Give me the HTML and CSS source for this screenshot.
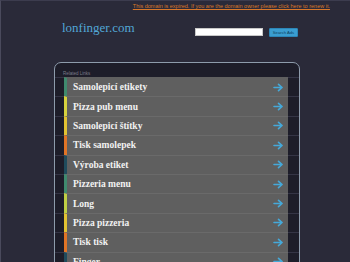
FILE: index.html
```html
<!DOCTYPE html>
<html>
<head>
<meta charset="utf-8">
<link rel="stylesheet" href="styles.css">
</head>
<body>
<div class="page">
  <div class="notice"><a href="#">This domain is expired. If you are the domain owner please click here to renew it.</a></div>
  <div class="header">
    <div class="logo">lonfinger.com</div>
    <form class="search">
      <input class="search-input" type="text">
      <button class="search-btn" type="button">Search Ads</button>
    </form>
  </div>
  <div class="panel">
    <div class="panel-title">Related Links</div>
    <div class="list">
      <div class="row"><div class="item c1"><span>Samolepicí etikety</span><svg class="arrow" viewBox="0 0 12 10"><path d="M1 5H10M6 1.5L10 5L6 8.5"/></svg></div></div>
      <div class="row"><div class="item c2"><span>Pizza pub menu</span><svg class="arrow" viewBox="0 0 12 10"><path d="M1 5H10M6 1.5L10 5L6 8.5"/></svg></div></div>
      <div class="row"><div class="item c3"><span>Samolepicí štítky</span><svg class="arrow" viewBox="0 0 12 10"><path d="M1 5H10M6 1.5L10 5L6 8.5"/></svg></div></div>
      <div class="row"><div class="item c4"><span>Tisk samolepek</span><svg class="arrow" viewBox="0 0 12 10"><path d="M1 5H10M6 1.5L10 5L6 8.5"/></svg></div></div>
      <div class="row"><div class="item c5"><span>Výroba etiket</span><svg class="arrow" viewBox="0 0 12 10"><path d="M1 5H10M6 1.5L10 5L6 8.5"/></svg></div></div>
      <div class="row"><div class="item c1"><span>Pizzeria menu</span><svg class="arrow" viewBox="0 0 12 10"><path d="M1 5H10M6 1.5L10 5L6 8.5"/></svg></div></div>
      <div class="row"><div class="item c6"><span>Long</span><svg class="arrow" viewBox="0 0 12 10"><path d="M1 5H10M6 1.5L10 5L6 8.5"/></svg></div></div>
      <div class="row"><div class="item c3"><span>Pizza pizzeria</span><svg class="arrow" viewBox="0 0 12 10"><path d="M1 5H10M6 1.5L10 5L6 8.5"/></svg></div></div>
      <div class="row"><div class="item c4"><span>Tisk tisk</span><svg class="arrow" viewBox="0 0 12 10"><path d="M1 5H10M6 1.5L10 5L6 8.5"/></svg></div></div>
      <div class="row"><div class="item c5"><span>Finger</span><svg class="arrow" viewBox="0 0 12 10"><path d="M1 5H10M6 1.5L10 5L6 8.5"/></svg></div></div>
    </div>
  </div>
</div>
</body>
</html>
```
FILE: styles.css
```css
html, body {
  margin: 0;
  padding: 0;
  height: 100%;
  overflow: hidden;
  background: #2a2a39;
}
.page {
  height: 100%;
  border-left: 1px solid #4a4a5c;
  border-top: 1px solid #3c3c4e;
  box-sizing: border-box;
  font-family: "Liberation Sans", Arial, sans-serif;
}
.notice {
  display: flex;
  justify-content: flex-end;
  padding: 2px 20px 0 0;
  height: 8px;
  font-size: 5.5px;
  line-height: 6px;
  white-space: nowrap;
}
.notice a {
  color: #d9782a;
  text-decoration: underline;
}
.header {
  display: flex;
  align-items: center;
  padding: 8px 0 0 61px;
  height: 26px;
  box-sizing: content-box;
}
.logo {
  font-family: "Liberation Serif", "Times New Roman", serif;
  font-size: 13px;
  color: #52a7d6;
  width: 133px;
  margin-top: -8px;
}
.search {
  display: flex;
  align-items: center;
  gap: 6px;
  margin: 0;
}
.search-input {
  width: 68px;
  height: 8px;
  padding: 0;
  margin: 0;
  border: 1px solid #c8c8c8;
  background: #ffffff;
  box-sizing: border-box;
}
.search-btn {
  width: 29px;
  height: 9px;
  padding: 0;
  margin: 0;
  border: 1px solid #2c86b8;
  background: #3a9dd0;
  color: #0d3d5e;
  font-family: "Liberation Sans", Arial, sans-serif;
  font-size: 4.2px;
  line-height: 7px;
  border-radius: 1px;
}
.panel {
  margin: 17px 0 0 53px;
  width: 246px;
  height: 260px;
  border: 1px solid #8d9bab;
  border-radius: 7px;
  background: #1d1d29;
  box-sizing: border-box;
  padding-top: 8px;
}
.panel-title {
  font-size: 4.5px;
  line-height: 6px;
  color: #7c7c8a;
  padding-left: 8px;
  height: 6px;
}
.list {
  display: flex;
  flex-direction: column;
}
.row {
  background: linear-gradient(#343445, #343445) top / 100% 1px no-repeat;
}
.item {
  display: flex;
  align-items: center;
  justify-content: space-between;
  margin: 0 11px 0 9px;
  height: 19.4px;
  box-sizing: border-box;
  border-top: 1px solid #6a6a6a;
  border-left: 3px solid #3f8a6e;
  background: #5f5f5f;
  padding: 0 4px 0 6px;
  font-family: "Liberation Serif", "Times New Roman", serif;
  font-weight: bold;
  font-size: 9.5px;
  color: #f2f2f2;
}
.row:first-child .item {
  border-top-color: #5f5f5f;
}
.c1 { border-left-color: #3f8a6e; }
.c2 { border-left-color: #d6d23e; }
.c3 { border-left-color: #e2c232; }
.c4 { border-left-color: #e07426; }
.c5 { border-left-color: #1f4b5c; }
.c6 { border-left-color: #bfcf44; }
.arrow {
  width: 11px;
  height: 9px;
  fill: none;
  stroke: #45a9d9;
  stroke-width: 1.8;
  stroke-linecap: round;
  stroke-linejoin: round;
}
```
